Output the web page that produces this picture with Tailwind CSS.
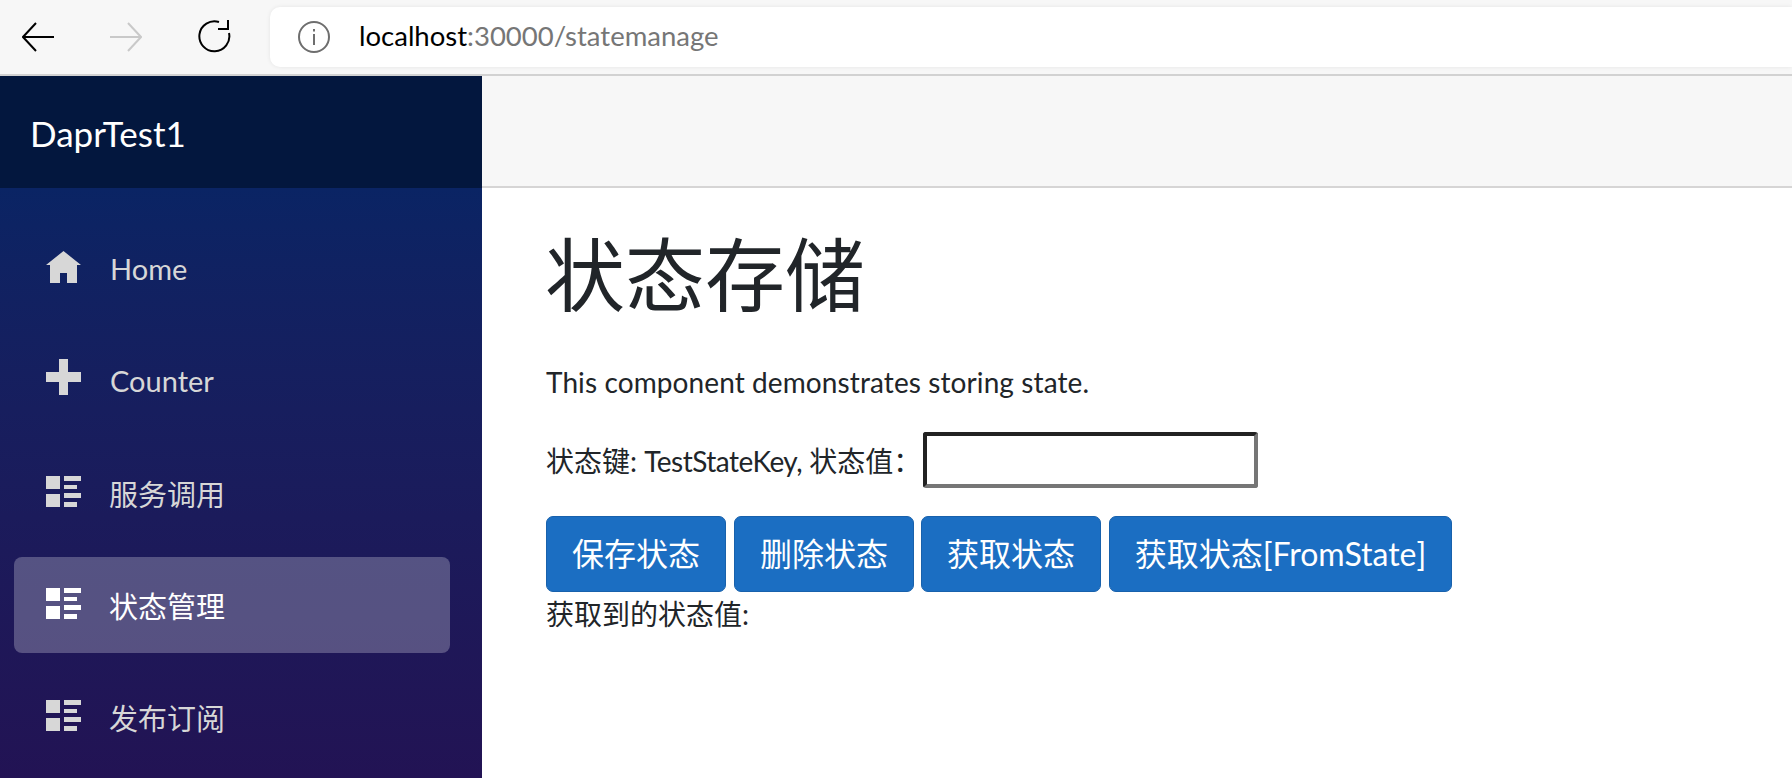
<!DOCTYPE html>
<html lang="zh-CN">
<head>
<meta charset="utf-8">
<script src="https://cdn.jsdelivr.net/npm/@tailwindcss/browser@4"></script>
</head>
<body class="h-[778px] w-[1792px] overflow-hidden bg-white font-['Lato','Noto_Sans_CJK_SC',sans-serif] text-[#212529]">
  <header class="flex h-[76px] items-center border-b-2 border-[#d2d2d2] bg-[#f7f7f7]">
    <div class="flex w-[270px] shrink-0 items-center pl-[22px]">
      <svg class="mr-[56px] h-[32px] w-[32px]" viewBox="0 0 32 32" fill="none" stroke="#000" stroke-width="2"><path d="M32 16H1M14 2 1 16l13 14"/></svg>
      <svg class="mr-[56px] h-[32px] w-[32px]" viewBox="0 0 32 32" fill="none" stroke="#c9c9c9" stroke-width="2"><path d="M0 16h31M18 2l13 14-13 14"/></svg>
      <svg class="h-[34px] w-[34px]" viewBox="0 0 34 34" fill="none" stroke="#000" stroke-width="2"><path d="M21 2A15 15 0 1 0 31 13"/><path d="M30 0v9H20"/></svg>
    </div>
    <div class="flex h-[60px] flex-1 items-center rounded-l-[10px] bg-white pl-[28px] shadow-[0_0_4px_rgba(0,0,0,0.08)]">
      <svg class="mr-[29px] h-[32px] w-[32px]" viewBox="0 0 32 32" fill="none" stroke="#6e6e6e" stroke-width="2"><circle cx="16" cy="16" r="15"/><path d="M16 13v11M16 8v2.500"/></svg>
      <span class="-mt-[2px] text-[27.5px] text-black">localhost<span class="text-[#767676]">:30000/statemanage</span></span>
    </div>
  </header>
  <div class="flex h-[702px]">
    <aside class="flex w-[482px] shrink-0 flex-col">
      <div class="flex h-[112px] shrink-0 items-center bg-[#03173e] pt-[2px] pl-[30px] text-[35px] text-white">DaprTest1</div>
      <nav class="flex flex-1 flex-col gap-[16px] bg-gradient-to-b from-[#0a2464] to-[#221354] pt-[33px] pr-[32px] pl-[14px] text-[29px] text-[#d7d7d7]">
        <a class="flex h-[96px] items-center rounded-lg pl-[32px]">
          <svg class="mr-[29px] -mt-[4px] h-[32px] w-[35px] shrink-0" viewBox="0 0 35 32" fill="#d7d7d7"><path d="M17.500 0 35 14h-4v18H21V22h-7v10H4V14H0z"/></svg><span>Home</span></a>
        <a class="flex h-[96px] items-center rounded-lg pl-[32px]">
          <svg class="mr-[29px] -mt-[8px] h-[36px] w-[35px] shrink-0" viewBox="0 0 35 36" fill="#d7d7d7"><path d="M13 0h9v13h13v10H22v13h-9V23H0V13h13z"/></svg><span>Counter</span></a>
        <a class="flex h-[96px] items-center rounded-lg pl-[32px]">
          <svg class="mr-[28px] -mt-[3px] h-[31px] w-[35px] shrink-0" viewBox="0 0 35 31" fill="#d7d7d7"><path d="M0 0h14v13H0zM0 18h14v13H0zM18 0h17v5H18zM18 9h13v4H18zM18 17h17v5H18zM18 26h13v5H18z"/></svg><span class="mt-[4px]">服务调用</span></a>
        <a class="flex h-[96px] items-center rounded-lg bg-white/25 pl-[32px] text-white">
          <svg class="mr-[28px] -mt-[3px] h-[31px] w-[35px] shrink-0" viewBox="0 0 35 31" fill="#fff"><path d="M0 0h14v13H0zM0 18h14v13H0zM18 0h17v5H18zM18 9h13v4H18zM18 17h17v5H18zM18 26h13v5H18z"/></svg><span class="mt-[4px]">状态管理</span></a>
        <a class="flex h-[96px] items-center rounded-lg pl-[32px]">
          <svg class="mr-[28px] -mt-[3px] h-[31px] w-[35px] shrink-0" viewBox="0 0 35 31" fill="#d7d7d7"><path d="M0 0h14v13H0zM0 18h14v13H0zM18 0h17v5H18zM18 9h13v4H18zM18 17h17v5H18zM18 26h13v5H18z"/></svg><span class="mt-[4px]">发布订阅</span></a>
      </nav>
    </aside>
    <main class="flex-1">
      <div class="h-[112px] border-b-2 border-[#d6d5d5] bg-[#f7f7f7]"></div>
      <div class="pt-[38px] pl-[64px] text-[28px] leading-[42px]">
        <h1 class="mb-[39px] -ml-[1px] text-[80px] leading-[96px] font-normal">状态存储</h1>
        <p class="mb-[29px] tracking-[0.1px]">This component demonstrates storing state.</p>
        <div class="mb-[28px] flex h-[56px] items-center"><span class="w-[377px] shrink-0 pt-[2px]">状态键: <span class="tracking-[-0.5px]">TestStateKey,</span> 状态值：</span><input class="h-[56px] w-[335px] rounded-[3px] border-4 border-t-[#222] border-r-[#767676] border-b-[#767676] border-l-[#222] bg-white" type="text"></div>
        <div class="flex gap-[8px]">
          <button class="h-[76px] w-[180px] rounded-[7px] border border-[#1861ac] bg-[#1b6ec2] text-[32px] text-white">保存状态</button>
          <button class="h-[76px] w-[180px] rounded-[7px] border border-[#1861ac] bg-[#1b6ec2] text-[32px] text-white">删除状态</button>
          <button class="-ml-[1px] h-[76px] w-[180px] rounded-[7px] border border-[#1861ac] bg-[#1b6ec2] text-[32px] text-white">获取状态</button>
          <button class="h-[76px] w-[343px] rounded-[7px] border border-[#1861ac] bg-[#1b6ec2] text-[32px] text-white">获取状态[FromState]</button>
        </div>
        <div class="mt-[1px]">获取到的状态值:</div>
      </div>
    </main>
  </div>
</body>
</html>
